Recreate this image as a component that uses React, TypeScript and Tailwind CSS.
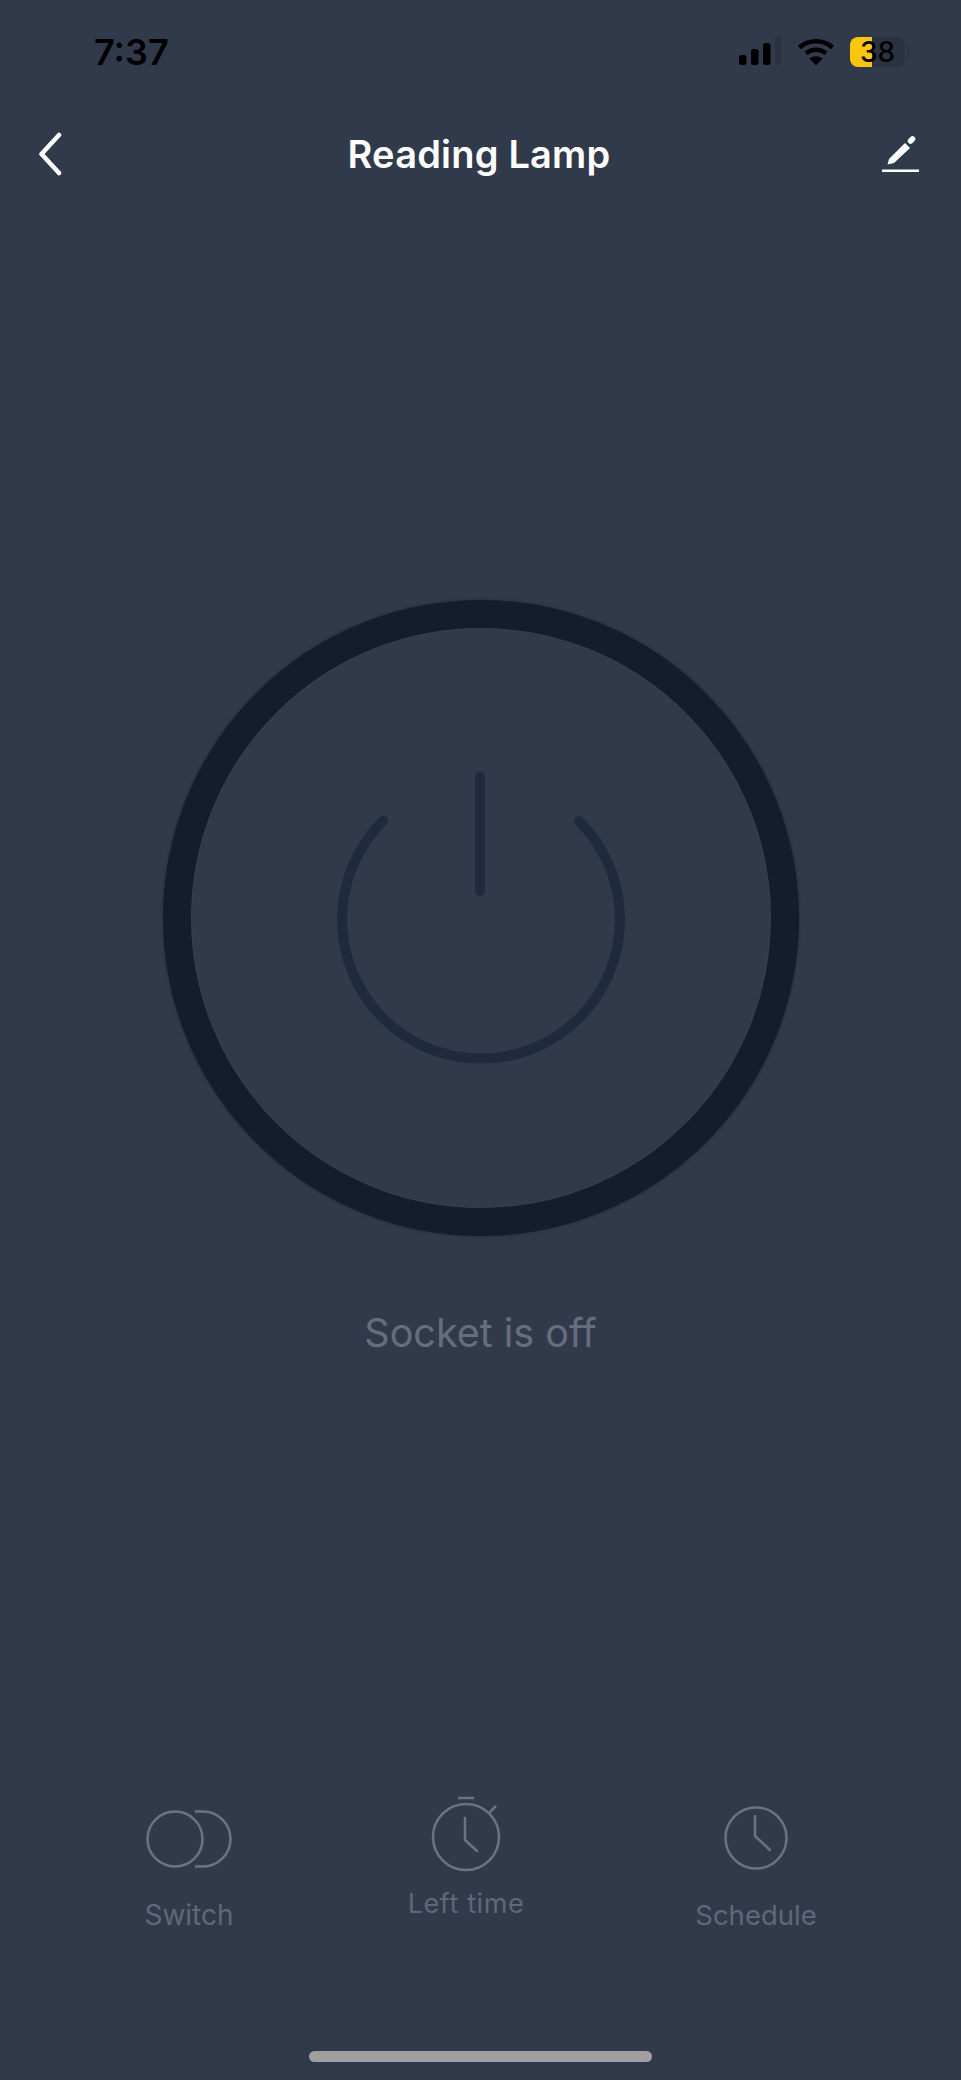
const font = "font-['Inter','Noto_Sans',sans-serif]"

function BackIcon() {
  return (
    <svg width="24" height="44" viewBox="0 0 24 44" fill="none">
      <path d="M21 3 L3.500 22 L21 41" stroke="#fff" strokeWidth="4.500" strokeLinecap="round" strokeLinejoin="round" />
    </svg>
  )
}

function EditIcon() {
  return (
    <svg width="38" height="38" viewBox="0 0 38 38" fill="none">
      <path d="M5.500 29.500 L7 24 L23 8 L28 13 L12 28 Z" fill="#fff" />
      <path d="M28.500 6 L30.500 4" stroke="#fff" strokeWidth="5.500" strokeLinecap="round" />
      <rect x="0" y="34.500" width="37" height="2.500" fill="#fff" />
    </svg>
  )
}

function SignalIcon() {
  return (
    <svg width="42" height="30" viewBox="0 0 42 30">
      <rect x="0" y="18" width="7.500" height="10" rx="2.500" fill="#000" />
      <rect x="12" y="12" width="7.500" height="16" rx="2.500" fill="#000" />
      <rect x="24" y="6" width="7.500" height="22" rx="2.500" fill="#000" />
      <rect x="36" y="0" width="6" height="28" rx="2.500" fill="#2b3240" />
    </svg>
  )
}

function WifiIcon() {
  return (
    <svg width="38" height="28" viewBox="0 0 38 28" fill="none">
      <path d="M2.500 9.500 C11.500 1 26.500 1 35.500 9.500" stroke="#000" strokeWidth="4.500" />
      <path d="M9 15.500 C14.500 10.500 23.500 10.500 29 15.500" stroke="#000" strokeWidth="4.500" />
      <path d="M19 27.500 L12.500 20.500 C16 17.500 22 17.500 25.500 20.500 Z" fill="#000" />
    </svg>
  )
}

function PowerIcon() {
  return (
    <svg width="300" height="300" viewBox="0 0 300 300" fill="none" stroke="#1f2a3d" strokeWidth="10" strokeLinecap="round">
      <path d="M149 9 L149 123" />
      <path d="M52 53 A 139 139 0 1 0 248 53" />
    </svg>
  )
}

function SwitchIcon() {
  return (
    <svg width="86" height="58" viewBox="0 0 86 58" fill="none" stroke="#6b7383" strokeWidth="2.500">
      <circle cx="29" cy="29" r="27.500" />
      <path d="M49 1.500 H57 A 27.500 27.500 0 0 1 57 56.500 H49" />
    </svg>
  )
}

function TimerIcon() {
  return (
    <svg width="72" height="76" viewBox="0 0 72 76" fill="none" stroke="#6b7383" strokeWidth="2.500">
      <circle cx="35" cy="41" r="33" />
      <path d="M27 2 H43" />
      <path d="M58 17 L65 10" />
      <path d="M34 22 V44 L46 55" strokeLinecap="round" strokeLinejoin="round" />
    </svg>
  )
}

function ClockIcon() {
  return (
    <svg width="64" height="64" viewBox="0 0 64 64" fill="none" stroke="#6b7383" strokeWidth="2.500">
      <circle cx="32" cy="32" r="30.500" />
      <path d="M31 10 V30 L46 44" strokeLinecap="round" strokeLinejoin="round" />
    </svg>
  )
}

export default function App() {
  return (
    <div className={`flex h-[2080px] w-[961px] flex-col overflow-hidden bg-[#313a4b] ${font}`}>
      <div className="flex h-[104px] items-center justify-between pl-[94px] pr-[51px]">
        <span className="text-[36px] leading-none font-semibold text-black">7:37</span>
        <div className="flex items-center">
          <SignalIcon />
          <div className="ml-[16px] mr-[15px]"><WifiIcon /></div>
          <div className="flex h-[30px] w-[55px] items-center justify-center rounded-[8px] bg-[linear-gradient(90deg,#fcc50f_40%,#2b3240_40%)] text-[28px] font-medium text-black">38</div>
          <div className="ml-[2px] h-[10px] w-[3px] rounded-r-full bg-[#2b3240]" />
        </div>
      </div>

      <div className="mt-[2px] flex h-[96px] items-center pl-[38px] pr-[41px]">
        <div className="flex-1"><BackIcon /></div>
        <span className="text-[38px] tracking-[0.2px] font-semibold text-white">Reading Lamp</span>
        <div className="flex flex-1 justify-end"><EditIcon /></div>
      </div>

      <div className="mt-[398px] flex justify-center">
        <div className="flex h-[636px] w-[636px] items-center justify-center rounded-full border-[28px] border-[#151d2c] shadow-[0_0_3px_#1f2839,inset_0_0_2px_#434c5e]">
          <PowerIcon />
        </div>
      </div>

      <div className="mt-[72px] text-center text-[39.500px] leading-[50px] text-[#666e7e]">Socket is off</div>

      <div className="mt-[438px] flex items-start pl-[89px]">
        <div className="flex w-[200px] flex-col items-center pt-[14px]">
          <SwitchIcon />
          <span className="mt-[30px] text-[28px] leading-[34px] text-[#5f6879]">Switch</span>
        </div>
        <div className="ml-[78px] flex w-[200px] flex-col items-center">
          <TimerIcon />
          <span className="mt-[15px] pr-[2px] text-[27px] leading-[34px] tracking-[0.6px] text-[#5f6879]">Left time</span>
        </div>
        <div className="ml-[89px] flex w-[200px] flex-col items-center pt-[10px]">
          <ClockIcon />
          <span className="mt-[28px] text-[27.500px] leading-[34px] text-[#5f6879]">Schedule</span>
        </div>
      </div>

      <div className="mt-auto mb-[18px] flex justify-center">
        <div className="h-[11px] w-[343px] rounded-full bg-[#a09e9e]" />
      </div>
    </div>
  )
}
